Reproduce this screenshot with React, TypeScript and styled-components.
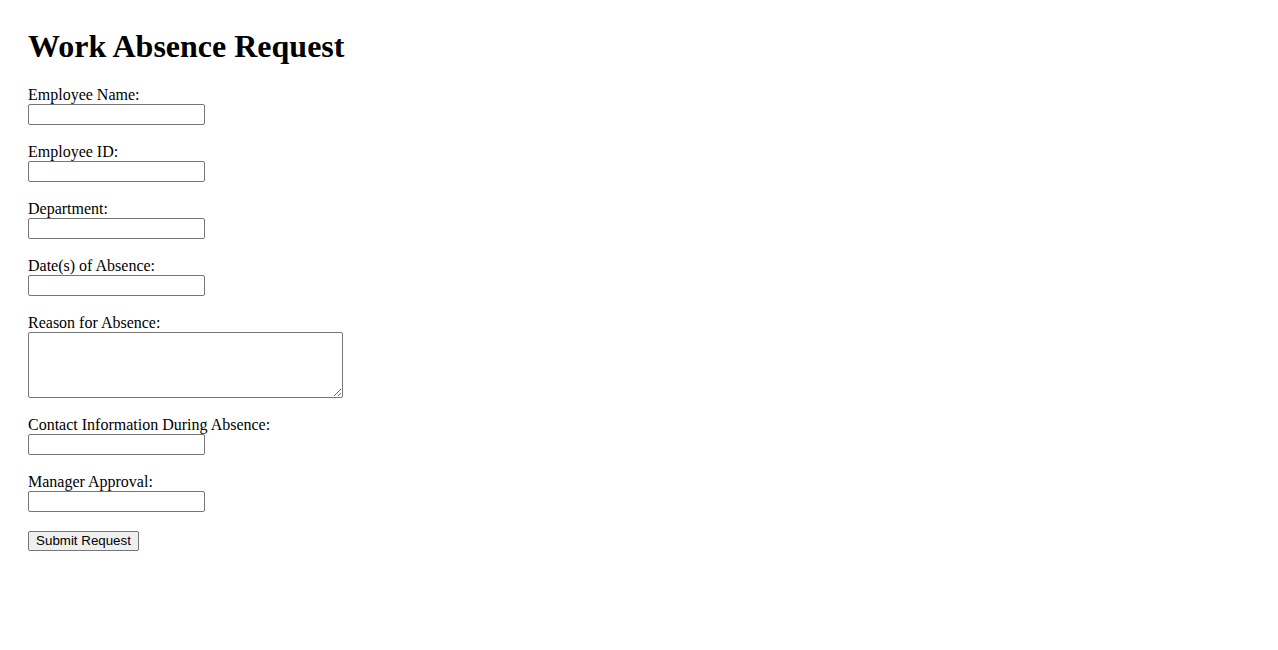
import React from "react";
import styled, { createGlobalStyle } from "styled-components";

const Global = createGlobalStyle`
  html, body { margin: 0; padding: 0; background: #fff; }
  body { font-family: "Liberation Serif", "Times New Roman", serif; color: #000; }
`;

const Page = styled.div`
  padding: 28px 28px;
`;

const Title = styled.h1`
  margin: 0;
  height: 56px;
  font-size: 32px;
  font-weight: bold;
  line-height: 37px;
`;

const Form = styled.form`
  display: flex;
  flex-direction: column;
  align-items: flex-start;
`;

const Field = styled.div`
  display: flex;
  flex-direction: column;
  align-items: flex-start;
  margin-bottom: 16px;
`;

const Label = styled.label`
  display: block;
  font-size: 16px;
  line-height: 22px;
  height: 20px;
`;

const Input = styled.input`
  box-sizing: border-box;
  width: 177px;
  height: 21px;
  margin: 0;
  padding: 1px 2px;
  border: 1px solid #767676;
  border-radius: 2px;
  background: #fff;
  font-family: "Liberation Sans", Arial, sans-serif;
  font-size: 13.33px;
`;

const TextArea = styled.textarea`
  box-sizing: border-box;
  width: 315px;
  height: 66px;
  margin: 0;
  padding: 2px;
  border: 1px solid #767676;
  border-radius: 2px;
  background: #fff;
  font-family: "Liberation Mono", monospace;
  font-size: 13.33px;
`;

const Button = styled.button`
  box-sizing: border-box;
  margin-top: 3px;
  height: 20px;
  width: 111px;
  padding: 0 6px;
  border: 1px solid #767676;
  border-radius: 2px;
  background: #efefef;
  color: #000;
  font-family: "Liberation Sans", Arial, sans-serif;
  font-size: 13.33px;
  line-height: 16px;
`;

const fields = [
  { id: "name", label: "Employee Name:" },
  { id: "eid", label: "Employee ID:" },
  { id: "dept", label: "Department:" },
  { id: "dates", label: "Date(s) of Absence:" },
  { id: "reason", label: "Reason for Absence:", area: true },
  { id: "contact", label: "Contact Information During Absence:" },
  { id: "manager", label: "Manager Approval:" },
];

export default function App() {
  return (
    <>
      <Global />
      <Page>
        <Title>Work Absence Request</Title>
        <Form onSubmit={(e) => e.preventDefault()}>
          {fields.map((f) => (
            <Field key={f.id}>
              <Label htmlFor={f.id}>{f.label}</Label>
              {f.area ? <TextArea id={f.id} /> : <Input id={f.id} type="text" />}
            </Field>
          ))}
          <Button type="submit">Submit Request</Button>
        </Form>
      </Page>
    </>
  );
}
